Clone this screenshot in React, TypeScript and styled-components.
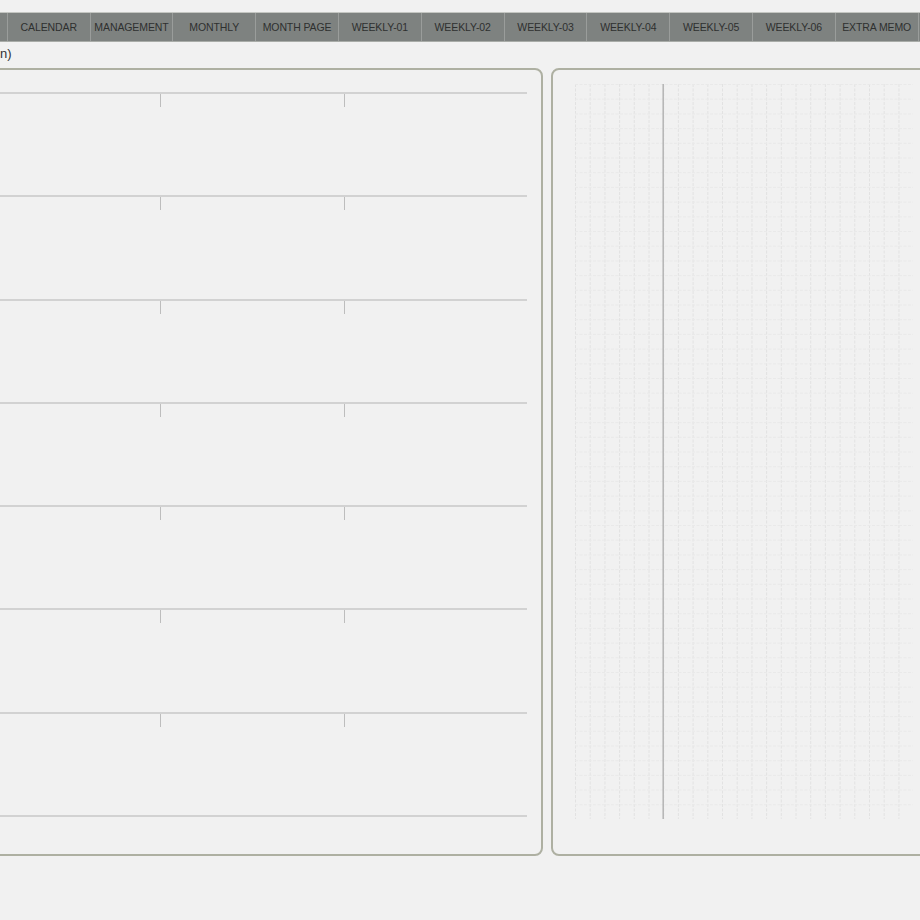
import styled, { createGlobalStyle } from 'styled-components';

const GlobalStyle = createGlobalStyle`
  html, body {
    margin: 0;
    padding: 0;
    background: #f1f1f1;
  }
  body {
    font-family: 'Liberation Sans', Arial, sans-serif;
    overflow: hidden;
  }
`;

const tabs = [
  '',
  'CALENDAR',
  'MANAGEMENT',
  'MONTHLY',
  'MONTH PAGE',
  'WEEKLY-01',
  'WEEKLY-02',
  'WEEKLY-03',
  'WEEKLY-04',
  'WEEKLY-05',
  'WEEKLY-06',
  'EXTRA MEMO',
  '',
];

const CELL = 14.7;
const GRID_COLS = 23;
const GRID_ROWS = 50;

// dotted grid paper on the memo side
const GridPaper = () => {
  const w = CELL * GRID_COLS;
  const h = CELL * GRID_ROWS;
  return (
    <svg width={w} height={h} viewBox={`0 0 ${w} ${h}`} style={{ display: 'block' }}>
      {Array.from({ length: GRID_COLS + 1 }).map((_, i) => (
        <line key={'v' + i} x1={i * CELL + 0.5} y1={0} x2={i * CELL + 0.5} y2={h} stroke="#e2e2e2" strokeWidth={1} strokeDasharray="3 1.5" />
      ))}
      {Array.from({ length: GRID_ROWS + 1 }).map((_, i) => (
        <line key={'h' + i} x1={0} y1={i * CELL + 0.5} x2={w} y2={i * CELL + 0.5} stroke="#e9e9e9" strokeWidth={1} strokeDasharray="3 1.5" />
      ))}
      <line x1={6 * CELL} y1={0} x2={6 * CELL} y2={h} stroke="#b4b4b4" strokeWidth={1.5} />
    </svg>
  );
};

export default function App() {
  return (
    <>
      <GlobalStyle />
      <Page>
        <TabBar>
          {tabs.map((name, i) => (
            <Tab key={i}>{name}</Tab>
          ))}
        </TabBar>
        <Caption>n)</Caption>
        <Spread>
          <LeftPanel>
            {Array.from({ length: 7 }).map((_, i) => (
              <LineRow key={i}>
                <Cell />
                <Cell tick />
                <Cell tick />
              </LineRow>
            ))}
            <LastLine />
          </LeftPanel>
          <RightPanel>
            <GridPaper />
          </RightPanel>
        </Spread>
      </Page>
    </>
  );
}

const Page = styled.div`
  width: 920px;
  height: 920px;
  overflow: hidden;
  position: relative;
`;

const TabBar = styled.div`
  display: flex;
  margin: 12px 0 0 -76px;
  height: 30px;
  background: #7e8280;
  border-top: 1px solid #c4c6c2;
  border-bottom: 1px solid #a9aca8;
  box-sizing: border-box;
  width: max-content;
`;

const Tab = styled.div`
  flex: 0 0 82.8px;
  box-sizing: border-box;
  border-left: 1.5px solid #9a9d9b;
  display: flex;
  align-items: center;
  justify-content: center;
  font-size: 10.5px;
  color: #2e302f;
  white-space: nowrap;
  letter-spacing: -0.1px;
`;

const Caption = styled.div`
  height: 26px;
  line-height: 24px;
  font-size: 13px;
  color: #333;
`;

const Spread = styled.div`
  display: flex;
  gap: 8px;
  margin-left: -39px;
  width: max-content;
`;

const Panel = styled.div`
  flex: 0 0 auto;
  box-sizing: border-box;
  height: 788px;
  border: 2px solid #aeb0a2;
  border-radius: 8px;
  background: #f1f1f1;
`;

const LeftPanel = styled(Panel)`
  width: 582px;
  padding: 22px 14px 0 14px;
  display: flex;
  flex-direction: column;
`;

const LineRow = styled.div`
  height: 103.3px;
  flex: 0 0 auto;
  box-sizing: border-box;
  border-top: 2px solid #d2d2d2;
  display: grid;
  grid-template-columns: repeat(3, 1fr);
`;

const Cell = styled.div<{ tick?: boolean }>`
  height: 13px;
  border-left: ${(p) => (p.tick ? '1.5px solid #bdbdbd' : 'none')};
`;

const LastLine = styled.div`
  border-top: 2px solid #d2d2d2;
`;

const RightPanel = styled(Panel)`
  width: 400px;
  padding: 14px 0 0 22px;
`;
